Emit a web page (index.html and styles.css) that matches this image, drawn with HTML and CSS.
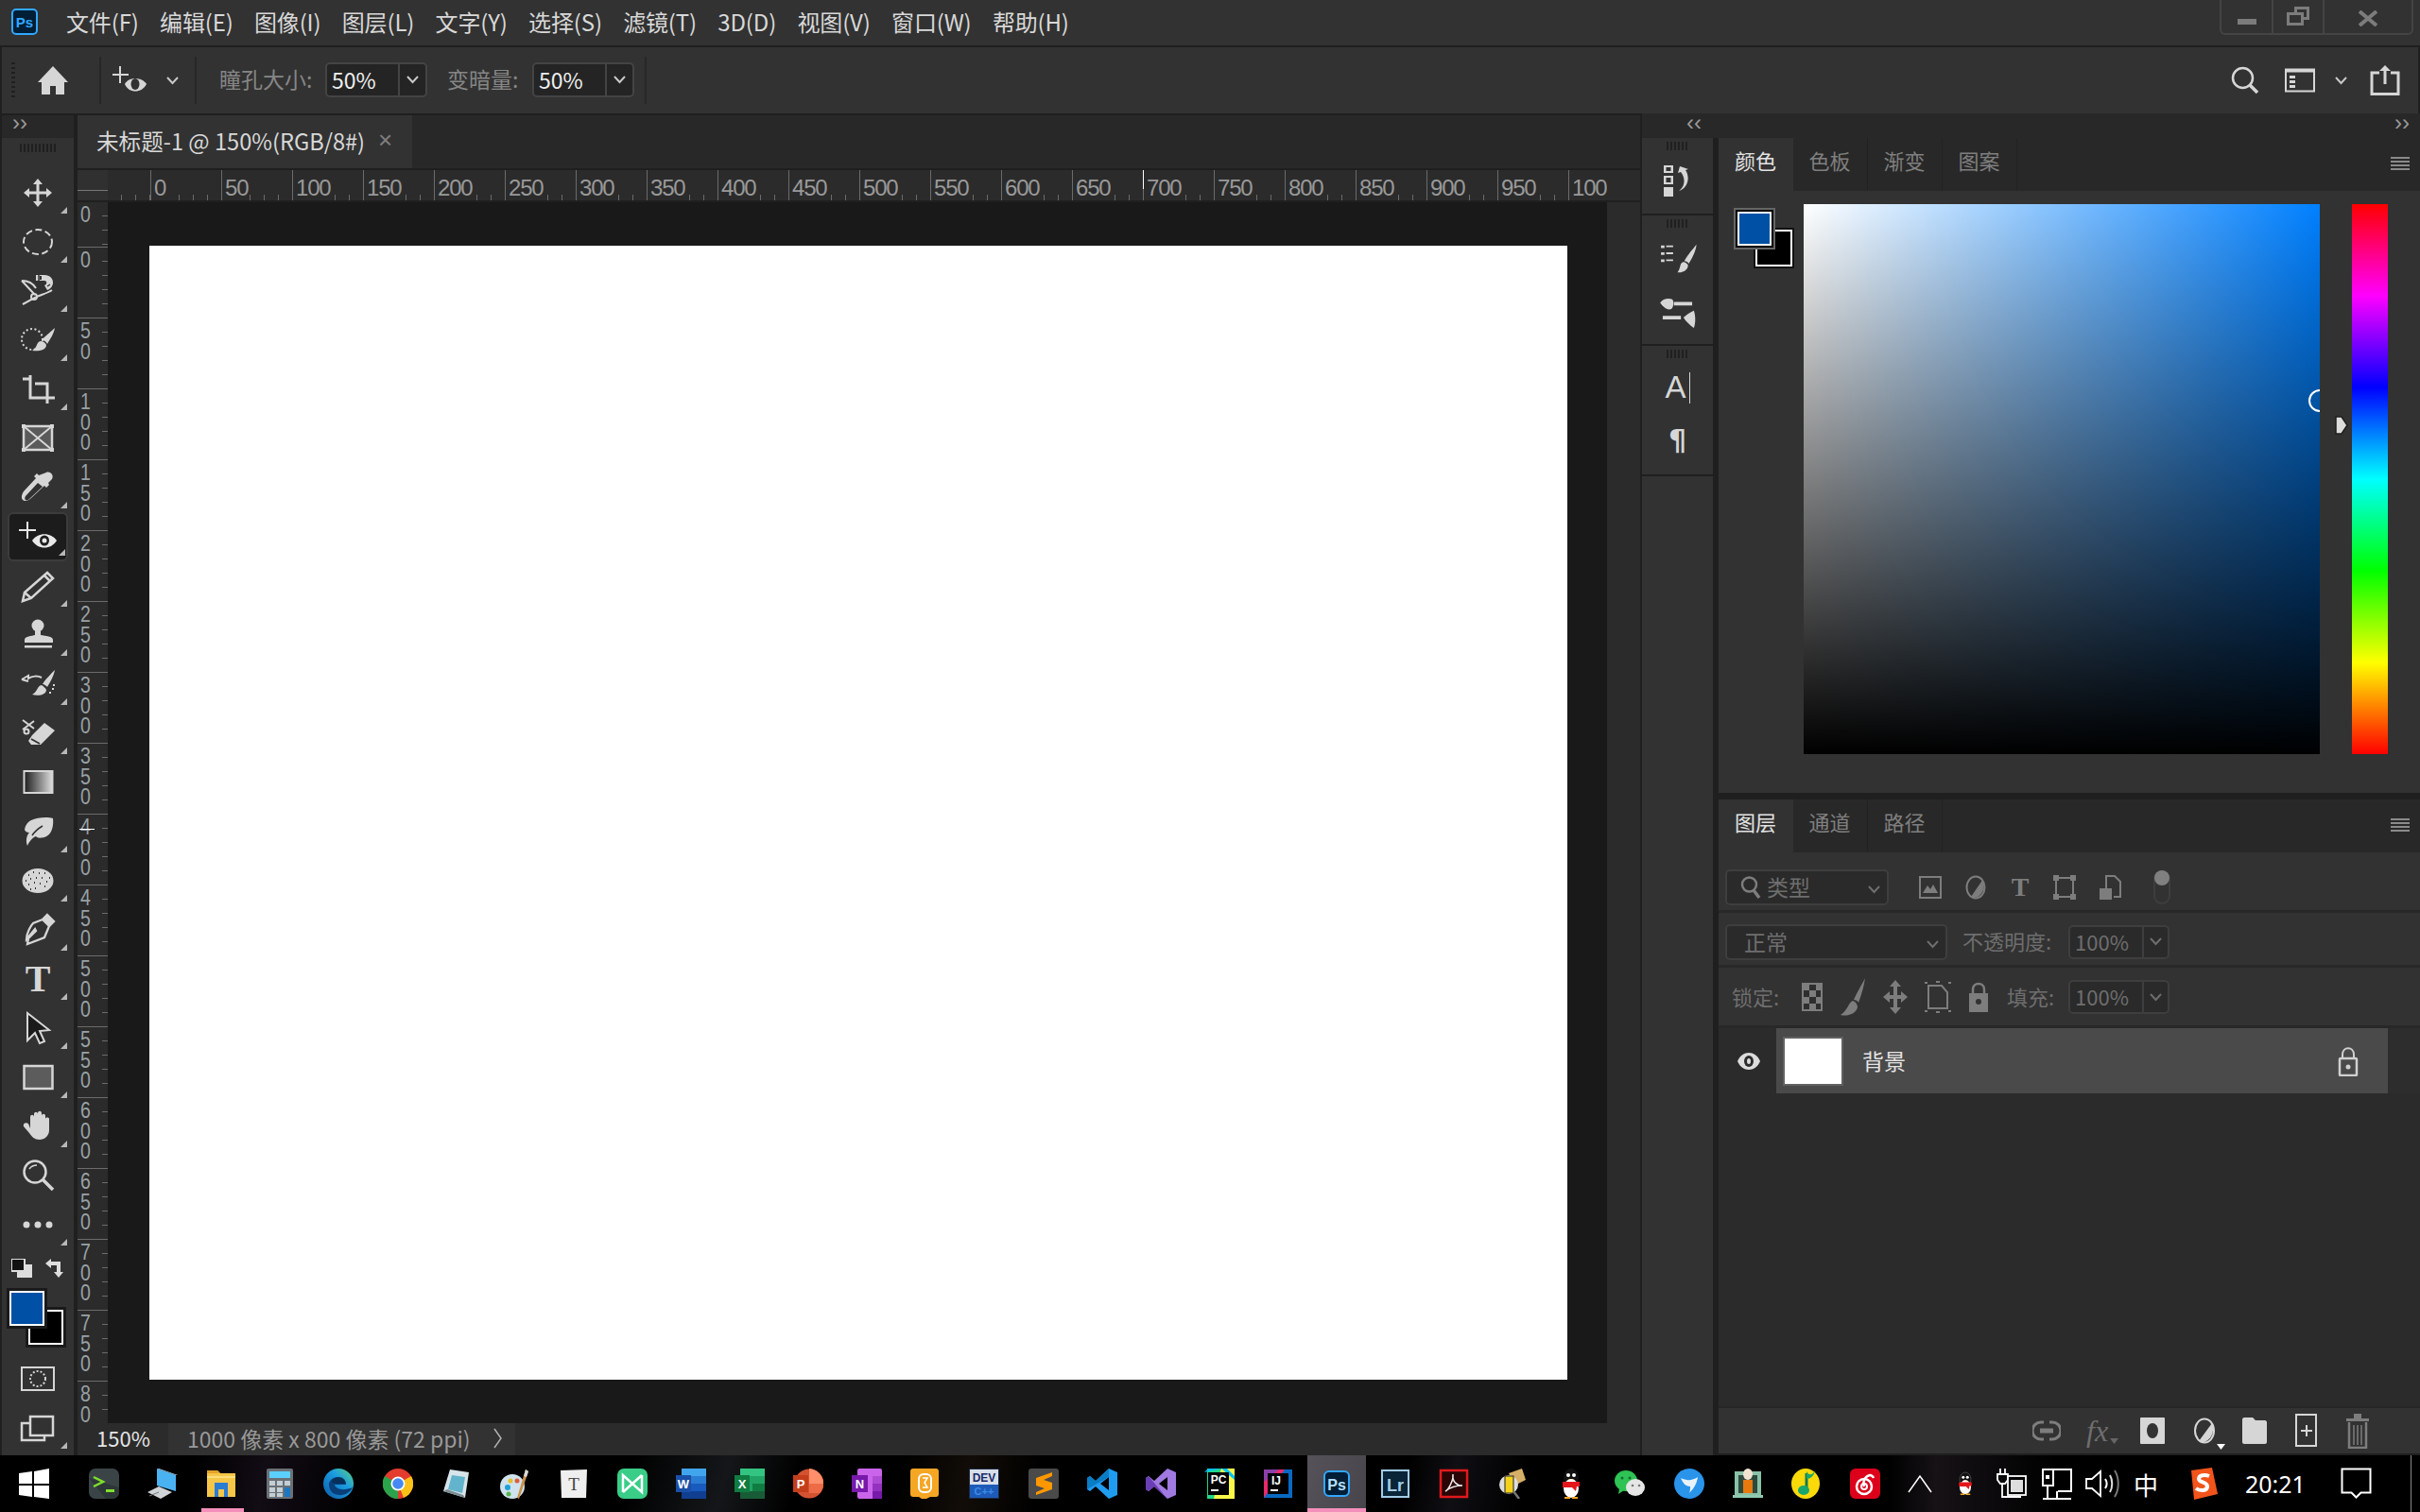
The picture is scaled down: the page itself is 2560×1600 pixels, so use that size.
FILE: index.html
```html
<!DOCTYPE html>
<html lang="zh">
<head>
<meta charset="utf-8">
<title>Photoshop</title>
<link rel="stylesheet" href="styles.css">
</head>
<body>
<header class="menubar">
  <svg class="ps-logo" viewBox="0 0 28 28"><rect x="1" y="1" width="26" height="26" rx="4" fill="#001e36" stroke="#31a8ff" stroke-width="2"/><text x="14" y="20" text-anchor="middle" class="logo-text" font-size="15" fill="#31a8ff">Ps</text></svg>
  <nav class="menu">
    <span>文件(F)</span><span>编辑(E)</span><span>图像(I)</span><span>图层(L)</span><span>文字(Y)</span><span>选择(S)</span><span>滤镜(T)</span><span>3D(D)</span><span>视图(V)</span><span>窗口(W)</span><span>帮助(H)</span>
  </nav>
  <div class="winctl">
    <div class="winbtn w-min"><svg width="20" height="6"><rect width="20" height="6" fill="#7c7c7c"/></svg></div>
    <div class="winbtn w-res"><svg width="24" height="20" viewBox="0 0 24 20"><path d="M8 0h16v14h-6v6H0V6h8zM11 3v3h7v5h3V3zM3 9v8h12V9z" fill="#7c7c7c"/></svg></div>
    <div class="winbtn w-close"><svg width="20" height="17" viewBox="0 0 20 17"><path d="M1 1l18 15M19 1L1 16" stroke="#7c7c7c" stroke-width="4"/></svg></div>
  </div>
</header>

<section class="options">
  <i class="opt-grip"></i>
  <svg class="opt-home" width="32" height="30" viewBox="0 0 32 30"><path d="M16 0L0 17h4v13h9v-9h6v9h9V17h4z" fill="#d6d6d6"/></svg>
  <i class="opt-sep s1"></i>
  <svg class="opt-tool" width="38" height="30" viewBox="0 0 38 30"><path d="M9 0v18M1 9h17" stroke="#d6d6d6" stroke-width="2" fill="none"/><path d="M14 19c4-8 18-8 23 0-5 10-19 10-23 0z" fill="#d6d6d6"/><ellipse cx="25" cy="19" rx="4.500" ry="6" fill="#323232"/></svg>
  <svg class="chev c1" width="13" height="9" viewBox="0 0 13 9"><path d="M1 1l5.500 6L12 1" stroke="#c8c8c8" stroke-width="2" fill="none"/></svg>
  <i class="opt-sep s2"></i>
  <span class="opt-label l1">瞳孔大小:</span>
  <div class="opt-input"><span class="opt-val">50%</span><span class="opt-drop"><svg width="13" height="9" viewBox="0 0 13 9"><path d="M1 1l5.500 6L12 1" stroke="#c8c8c8" stroke-width="2" fill="none"/></svg></span></div>
  <span class="opt-label l2">变暗量:</span>
  <div class="opt-input"><span class="opt-val">50%</span><span class="opt-drop"><svg width="13" height="9" viewBox="0 0 13 9"><path d="M1 1l5.500 6L12 1" stroke="#c8c8c8" stroke-width="2" fill="none"/></svg></span></div>
  <i class="opt-sep s3"></i>
  <div class="opt-right">
    <svg width="30" height="30" viewBox="0 0 30 30"><circle cx="12.500" cy="12.500" r="10.500" fill="none" stroke="#d6d6d6" stroke-width="2.500"/><path d="M20 20l8 8" stroke="#d6d6d6" stroke-width="3.500"/></svg>
    <svg class="or-panel" width="32" height="26" viewBox="0 0 32 26"><path d="M1 1.500h30v23H1z" fill="none" stroke="#d6d6d6" stroke-width="2"/><path d="M1 1.500h30v3H1z" fill="#d6d6d6"/><path d="M5 8h6v3H5zM5 13h6v3H5zM5 18h6v3H5z" fill="#d6d6d6"/></svg>
    <svg class="or-chev" width="13" height="9" viewBox="0 0 13 9"><path d="M1 1l5.500 6L12 1" stroke="#c8c8c8" stroke-width="2" fill="none"/></svg>
    <svg class="or-share" width="32" height="32" viewBox="0 0 32 32"><path d="M10 8H2v22.500h28V8h-8" fill="none" stroke="#d6d6d6" stroke-width="3"/><path d="M16 0l-6 6h4.500v14h3V6H22z" fill="#d6d6d6"/></svg>
  </div>
</section>

<main class="workspace">
  <aside class="toolcol">
    <div class="collapse"><span class="dbl">&rsaquo;&rsaquo;</span></div>
    <div class="tools">
      <i class="grip"></i>
      <div class="tool more"><svg viewBox="0 0 40 40"><path d="M20 5l-5 6h3.500v7.500H11V15l-6 5 6 5v-3.500h7.500V29H15l5 6 5-6h-3.500v-7.500H29V25l6-5-6-5v3.500h-7.500V11H25z" fill="#d6d6d6"/></svg></div>
      <div class="tool more"><svg viewBox="0 0 40 40"><ellipse cx="20" cy="20" rx="15" ry="13" fill="none" stroke="#d6d6d6" stroke-width="2" stroke-dasharray="7 3.500"/></svg></div>
      <div class="tool more"><svg viewBox="0 0 40 40"><path d="M3 9l14 15M3 9c6 0 12 3 15 8M4 34l13-7c5-3 12-4 18-8" fill="none" stroke="#d6d6d6" stroke-width="2"/><circle cx="16" cy="26" r="3" fill="none" stroke="#d6d6d6" stroke-width="2"/><path d="M18 3h9c6 0 9 4 9 8s-3 7-6 8l-3-5c3-1 3-5 0-5h-9zM22 4v4h2V4zM22 14" fill="#d6d6d6"/><path d="M21 3v6M30 15l3-2" stroke="#323232" stroke-width="1.500"/></svg></div>
      <div class="tool more"><svg viewBox="0 0 40 40"><circle cx="14" cy="19" r="11" fill="none" stroke="#d6d6d6" stroke-width="2" stroke-dasharray="2 2.500"/><path d="M38 7c-4 4-10 8-14 13 3 0 5 2 6 4 3-5 7-11 8-17zM23 21c-5 1-3 7-9 10 6 1 15 0 15-6-1-2-3-4-6-4z" fill="#d6d6d6"/></svg></div>
      <div class="tool more"><svg viewBox="0 0 40 40"><path d="M4 9h8M12 5v24h20M30 35V14H17M32 29h6" fill="none" stroke="#d6d6d6" stroke-width="3"/></svg></div>
      <div class="tool"><svg viewBox="0 0 40 40"><rect x="5" y="7" width="30" height="25" fill="#5a5a5a" stroke="#d6d6d6" stroke-width="2.500"/><path d="M5 7l30 25M35 7L5 32" stroke="#d6d6d6" stroke-width="2"/><path d="M3 5h4v4H3zM33 5h4v4h-4zM3 30h4v4H3zM33 30h4v4h-4z" fill="#d6d6d6"/></svg></div>
      <div class="tool more"><svg viewBox="0 0 40 40"><path d="M29 4c2-1 5 0 6 2s1 4-1 6l-3 3 1 2-3 3-2-2-14 13c-3 3-7 4-9 2-2-2-1-6 1-9l13-14-2-2 3-3 2 2z" fill="#d6d6d6"/><path d="M20 15L7 29c-1 2-1 3 0 4s3 0 4-1l14-13z" fill="#323232"/></svg></div>
      <div class="tool active more"><svg viewBox="0 0 40 40"><path d="M9 4v18M0 13h18" stroke="#e8e8e8" stroke-width="2"/><path d="M14 24c6-9 20-9 26 0-6 10-20 10-26 0z" fill="#e8e8e8"/><ellipse cx="27" cy="24" rx="5" ry="5.500" fill="#1c1c1c"/><circle cx="27" cy="24" r="2.500" fill="#e8e8e8"/></svg></div>
      <div class="tool more"><svg viewBox="0 0 40 40"><path d="M30 6l6 6L13 33l-9 3 2-9zM27 9l6 6M6 27l7 6" fill="none" stroke="#d6d6d6" stroke-width="2.500"/></svg></div>
      <div class="tool more"><svg viewBox="0 0 40 40"><circle cx="20" cy="10" r="6.500" fill="#d6d6d6"/><path d="M17 14h6v6c5 1 13 1 13 5v3H6v-3c0-4 8-4 11-5z" fill="#d6d6d6"/><path d="M6 31h29v2.500H6z" fill="#d6d6d6"/></svg></div>
      <div class="tool more"><svg viewBox="0 0 40 40"><path d="M38 5c-4 4-10 10-13 15 2 0 4 2 5 3 3-5 7-12 8-18zM24 21c-5 1-4 7-10 10 7 2 15 0 15-5-1-2-3-4-5-5z" fill="#d6d6d6"/><path d="M3 15l7-4v3c4-3 10-3 14-1M3 15l7 2" fill="none" stroke="#d6d6d6" stroke-width="2"/><path d="M32 29h2M35 25h2M36 21h2" stroke="#d6d6d6" stroke-width="2"/></svg></div>
      <div class="tool more"><svg viewBox="0 0 40 40"><path d="M4 6l12 9M4 16l12-9" stroke="#d6d6d6" stroke-width="2"/><circle cx="8" cy="18" r="2.500" fill="none" stroke="#d6d6d6" stroke-width="2"/><path d="M14 22L27 9l11 8-15 15H13l-3-4z" fill="#d6d6d6"/><path d="M13 26l9 5" stroke="#323232" stroke-width="2"/></svg></div>
      <div class="tool"><svg viewBox="0 0 40 40"><defs><linearGradient id="tg"><stop offset="0" stop-color="#1c1c1c"/><stop offset="1" stop-color="#ddd"/></linearGradient></defs><rect x="5.500" y="8" width="30" height="23" fill="url(#tg)" stroke="#d6d6d6" stroke-width="2"/></svg></div>
      <div class="tool more"><svg viewBox="0 0 40 40"><path d="M13 8c6-3 17-4 23-2 1 7-1 18-9 20-5 1-7 1-9-1-3 1-7 5-9 10-2-5-1-11 2-14-3 0-4-1-5-3 1-5 3-8 7-10z" fill="#d6d6d6"/><path d="M14 24c2-3 6-7 11-10" stroke="#323232" stroke-width="1.500" fill="none"/></svg></div>
      <div class="tool more"><svg viewBox="0 0 40 40"><ellipse cx="20" cy="20" rx="16.500" ry="13" fill="#d6d6d6"/><path d="M10 14h1M15 11h1M21 12h1M27 12h1M32 17h1M7 20h1M12 18h1M18 17h1M24 17h1M29 21h1M10 24h1M16 22h1M22 23h1M27 26h1M17 28h1M12 29h1" stroke="#323232" stroke-width="2"/></svg></div>
      <div class="tool more"><svg viewBox="0 0 40 40"><path d="M30 4l7 7-4 4-7-7zM25 9l7 7-5 12-18 7 1-6 8-8-1-2-9 11c0-7 5-15 7-17z" fill="none" stroke="#d6d6d6" stroke-width="2.300"/><path d="M30 4l7 7-4 4-7-7z" fill="#d6d6d6"/></svg></div>
      <div class="tool more"><span class="tool-t">T</span></div>
      <div class="tool more"><svg viewBox="0 0 40 40"><path d="M9 4l23 18-10 1 5 11-5 2-5-11-8 8z" fill="#1a1a1a" stroke="#d6d6d6" stroke-width="2"/></svg></div>
      <div class="tool more"><svg viewBox="0 0 40 40"><rect x="5.500" y="8" width="30" height="24" fill="#5c5c5c" stroke="#d6d6d6" stroke-width="2.500"/></svg></div>
      <div class="tool more"><svg viewBox="0 0 40 40"><path d="M12 22V10c0-3 4-3 4 0V7c0-3 4-3 4 0v-1c0-3 4-3 4 0v3c0-3 4-3 4 0v3c0-2 4-2 4 0v12c0 6-5 10-10 10-6 0-8-3-11-7l-6-7c-1-3 2-5 5-3z" fill="#d6d6d6"/></svg></div>
      <div class="tool"><svg viewBox="0 0 40 40"><circle cx="17" cy="16" r="11.500" fill="none" stroke="#d6d6d6" stroke-width="2.500"/><path d="M25 24l11 11" stroke="#d6d6d6" stroke-width="3.500"/><path d="M11 13c2-3 5-4 8-4" stroke="#d6d6d6" stroke-width="1.500" fill="none"/></svg></div>
      <div class="tool more"><svg viewBox="0 0 40 40"><circle cx="8" cy="20" r="3.500" fill="#d6d6d6"/><circle cx="20" cy="20" r="3.500" fill="#d6d6d6"/><circle cx="32" cy="20" r="3.500" fill="#d6d6d6"/></svg></div>
      <div class="color-tools">
        <svg class="ct-reset" width="22" height="20" viewBox="0 0 22 20"><rect x="0" y="0" width="14" height="13" fill="#111" stroke="#ddd" stroke-width="2"/><path d="M14 6h8v14H6v-6h8z" fill="#ddd"/></svg>
        <svg class="ct-swap" width="20" height="20" viewBox="0 0 20 20"><path d="M0 5l6-5v3h10v11h3l-5 6-5-6h3V7H6v3z" fill="#ddd"/></svg>
      </div>
      <div class="fgbg"><i class="bg-swatch"></i><i class="fg-swatch"></i></div>
      <div class="tool qm"><svg viewBox="0 0 40 40"><rect x="3" y="8" width="34" height="24" fill="none" stroke="#d6d6d6" stroke-width="2"/><circle cx="20" cy="20" r="8" fill="none" stroke="#d6d6d6" stroke-width="2" stroke-dasharray="2 2"/></svg></div>
      <div class="tool more"><svg viewBox="0 0 40 40"><path d="M12 15H3v18h24v-5" fill="none" stroke="#d6d6d6" stroke-width="2.500"/><rect x="12" y="8" width="24" height="20" fill="#323232" stroke="#d6d6d6" stroke-width="2.500"/></svg></div>
    </div>
  </aside>

  <section class="doc">
    <div class="doc-tabs"><div class="doc-tab"><span>未标题-1 @ 150%(RGB/8#)</span><b>×</b></div></div>
    <div class="hrow">
      <div class="rcorner"></div>
      <div class="hruler">
        <div class="hcell first"></div>
        <div class="hcell"><span>0</span></div><div class="hcell"><span>50</span></div><div class="hcell"><span>100</span></div><div class="hcell"><span>150</span></div><div class="hcell"><span>200</span></div><div class="hcell"><span>250</span></div><div class="hcell"><span>300</span></div><div class="hcell"><span>350</span></div><div class="hcell"><span>400</span></div><div class="hcell"><span>450</span></div><div class="hcell"><span>500</span></div><div class="hcell"><span>550</span></div><div class="hcell"><span>600</span></div><div class="hcell"><span>650</span></div><div class="hcell marked"><span>700</span></div><div class="hcell"><span>750</span></div><div class="hcell"><span>800</span></div><div class="hcell"><span>850</span></div><div class="hcell"><span>900</span></div><div class="hcell"><span>950</span></div><div class="hcell"><span>1000</span></div>
      </div>
      <div class="gutter"></div>
    </div>
    <div class="mainrow">
      <div class="vruler">
        <div class="vcell first"><span>0</span></div>
        <div class="vcell"><span>0</span></div><div class="vcell"><span>5</span><span>0</span></div><div class="vcell"><span>1</span><span>0</span><span>0</span></div><div class="vcell"><span>1</span><span>5</span><span>0</span></div><div class="vcell"><span>2</span><span>0</span><span>0</span></div><div class="vcell"><span>2</span><span>5</span><span>0</span></div><div class="vcell"><span>3</span><span>0</span><span>0</span></div><div class="vcell"><span>3</span><span>5</span><span>0</span></div><div class="vcell marked"><span>4</span><span>0</span><span>0</span></div><div class="vcell"><span>4</span><span>5</span><span>0</span></div><div class="vcell"><span>5</span><span>0</span><span>0</span></div><div class="vcell"><span>5</span><span>5</span><span>0</span></div><div class="vcell"><span>6</span><span>0</span><span>0</span></div><div class="vcell"><span>6</span><span>5</span><span>0</span></div><div class="vcell"><span>7</span><span>0</span><span>0</span></div><div class="vcell"><span>7</span><span>5</span><span>0</span></div><div class="vcell"><span>8</span><span>0</span></div>
      </div>
      <div class="pasteboard"><div class="artboard"></div></div>
      <div class="gutter"></div>
    </div>
    <div class="status">
      <span class="st-zoom">150%</span>
      <span class="st-info">1000 像素 x 800 像素 (72 ppi)<svg width="10" height="22" viewBox="0 0 10 22"><path d="M1 1l7 10-7 10" fill="none" stroke="#b0b0b0" stroke-width="1.500"/></svg></span>
    </div>
  </section>

  <div class="rightarea">
    <div class="rstrip"><span class="dbl d-left">&lsaquo;&lsaquo;</span><span class="dbl d-right">&rsaquo;&rsaquo;</span></div>
    <div class="rmain">
      <div class="dock">
        <div class="dblock b1"><i class="grip"></i>
          <svg width="30" height="33" viewBox="0 0 30 33"><path d="M0 0h10v8H0zM2.500 2v4h5V2zM0 11h10v9H0zM2.500 13v5h5v-5zM0 23h10v10H0z" fill="#d6d6d6"/><path d="M17 1l-2 7 3-1c5 6 5 15-2 20 8-2 13-13 7-22l3-1z" fill="#d6d6d6"/></svg>
        </div>
        <div class="dblock b2"><i class="grip"></i>
          <svg class="brp" width="41" height="33" viewBox="0 0 44 36"><path d="M3 3h4v3H3zM9 3h8v2H9zM3 11h4v3H3zM9 11h8v2H9zM3 19h4v3H3zM9 19h8v2H9z" fill="#d6d6d6"/><path d="M44 2c-4 5-11 13-14 19 2 0 4 1 5 3 4-6 8-14 9-22zM29 22c-5 1-3 8-7 12 6 1 13-3 12-9-1-1-3-3-5-3z" fill="#d6d6d6"/></svg>
          <svg class="adj" width="41" height="33" viewBox="0 0 44 36"><path d="M2 6c3-5 10-6 14-4 2 2 2 8-1 11-5 2-9-2-13-7zM18 5h21v4H18zM5 21h21v4H5zM29 23c3-3 9-7 12-8 2 6 2 14 0 20-3-2-9-7-12-12z" fill="#d6d6d6"/></svg>
        </div>
        <div class="dblock b3"><i class="grip"></i>
          <div class="dk-a"><span>A</span><i></i></div>
          <div class="dk-p">¶</div>
        </div>
        <div class="dblock b4"></div>
      </div>
      <div class="panels">
        <section class="panel p-color">
          <div class="ptabs">
            <span class="ptab on">颜色</span><span class="ptab">色板</span><span class="ptab">渐变</span><span class="ptab">图案</span>
            <svg class="pmenu" width="20" height="14" viewBox="0 0 20 14"><path d="M0 0h20v2H0zM0 4h20v2H0zM0 8h20v2H0zM0 12h20v2H0z" fill="#8a8a8a"/></svg>
          </div>
          <div class="colorbody">
            <div class="cswatch"><i class="cs-bg"></i><i class="cs-fg"></i></div>
            <div class="cfield"><i class="ccursor"></i></div>
            <div class="hue-wrap">
              <svg class="hue-handle" width="14" height="24" viewBox="0 0 14 24"><path d="M1 3h6l6 9-6 9H1z" fill="#ddd" stroke="#1f1f1f" stroke-width="1.500"/></svg>
              <div class="hue"></div>
            </div>
          </div>
        </section>
        <section class="panel p-layers">
          <div class="ptabs">
            <span class="ptab on">图层</span><span class="ptab">通道</span><span class="ptab">路径</span>
            <svg class="pmenu" width="20" height="14" viewBox="0 0 20 14"><path d="M0 0h20v2H0zM0 4h20v2H0zM0 8h20v2H0zM0 12h20v2H0z" fill="#8a8a8a"/></svg>
          </div>
          <div class="lrow r-filter">
            <div class="lselect ls-kind">
              <svg width="22" height="26" viewBox="0 0 22 26"><circle cx="9.500" cy="10" r="7.500" fill="none" stroke="#7d7d7d" stroke-width="2.500"/><path d="M14 16l6 8" stroke="#7d7d7d" stroke-width="3.500"/></svg>
              <span>类型</span>
              <svg class="sel-chev" width="13" height="9" viewBox="0 0 13 9"><path d="M1 1l5.500 6L12 1" stroke="#6e6e6e" stroke-width="2" fill="none"/></svg>
            </div>
            <div class="fil-icons">
              <svg width="24" height="24" viewBox="0 0 24 24"><rect x="1" y="1" width="22" height="22" fill="none" stroke="#7d7d7d" stroke-width="2"/><path d="M4 18l5-8 3 4 3-5 5 9z" fill="#7d7d7d"/></svg>
              <svg width="24" height="26" viewBox="0 0 24 26"><ellipse cx="12" cy="13" rx="9.500" ry="11.500" fill="none" stroke="#7d7d7d" stroke-width="2"/><path d="M19 5.500A10 12 0 0 1 7 23z" fill="#7d7d7d"/></svg>
              <span class="fi-t">T</span>
              <svg width="24" height="26" viewBox="0 0 24 26"><rect x="3" y="3" width="18" height="20" fill="none" stroke="#7d7d7d" stroke-width="2"/><path d="M0 0h6v6H0zM18 0h6v6h-6zM0 20h6v6H0zM18 20h6v6h-6z" fill="#7d7d7d"/></svg>
              <svg width="24" height="26" viewBox="0 0 24 26"><path d="M8 14V1h9l6 6v16h-7" fill="none" stroke="#7d7d7d" stroke-width="2"/><rect x="1" y="14" width="13" height="12" fill="#7d7d7d"/></svg>
            </div>
            <div class="ftoggle"><i></i></div>
          </div>
          <div class="lrow r-blend">
            <div class="lselect ls-mode"><span>正常</span><svg class="sel-chev" width="13" height="9" viewBox="0 0 13 9"><path d="M1 1l5.500 6L12 1" stroke="#6e6e6e" stroke-width="2" fill="none"/></svg></div>
            <span class="llabel lb-op">不透明度:</span>
            <div class="lpct"><span>100%</span><b><svg width="13" height="9" viewBox="0 0 13 9"><path d="M1 1l5.500 6L12 1" stroke="#6e6e6e" stroke-width="2" fill="none"/></svg></b></div>
          </div>
          <div class="lrow r-lock">
            <span class="llabel lb-lock">锁定:</span>
            <div class="lock-icons">
              <svg width="22" height="30" viewBox="0 0 22 30"><rect x="1" y="1" width="20" height="28" fill="#2e2e2e" stroke="#7d7d7d" stroke-width="2"/><path d="M1 1h7v7H1zM15 1h6v7h-6zM8 8h7v7H8zM1 15h7v7H1zM15 15h6v7h-6zM8 22h7v7H8z" fill="#7d7d7d"/></svg>
              <svg width="28" height="40" viewBox="0 0 28 40"><path d="M27 0c-3 6-9 16-12 23 2 0 4 1 5 3 3-8 6-18 7-26zM14 24c-5 2-5 10-13 15 7 2 16-1 18-8 0-3-2-6-5-7z" fill="#7d7d7d"/></svg>
              <svg width="26" height="36" viewBox="0 0 26 36"><path d="M13 0l-6 7h4v9H7v-4l-7 6 7 6v-4h4v9H7l6 7 6-7h-4v-9h4v4l7-6-7-6v4h-4V7h4z" fill="#7d7d7d"/></svg>
              <svg width="28" height="34" viewBox="0 0 28 34"><path d="M4 5h14l6 7v17H4z" fill="none" stroke="#7d7d7d" stroke-width="2"/><path d="M0 1h3v2H0zM25 1h3v2h-3zM0 31h3v2H0zM25 31h3v2h-3zM12 0h4v2h-4zM12 32h4v2h-4z" fill="#7d7d7d"/></svg>
              <svg width="22" height="32" viewBox="0 0 22 32"><path d="M5 13V8c0-8 12-8 12 0v5" fill="none" stroke="#7d7d7d" stroke-width="2.500"/><path d="M1 12h20v20H1z" fill="#7d7d7d"/><circle cx="11" cy="21" r="3" fill="#323232"/></svg>
            </div>
            <span class="llabel lb-fill">填充:</span>
            <div class="lpct"><span>100%</span><b><svg width="13" height="9" viewBox="0 0 13 9"><path d="M1 1l5.500 6L12 1" stroke="#6e6e6e" stroke-width="2" fill="none"/></svg></b></div>
          </div>
          <div class="llist">
            <div class="layer">
              <div class="leye"><svg width="26" height="20" viewBox="0 0 26 20"><path d="M1 10c5-12 19-12 24 0-5 12-19 12-24 0z" fill="#dcdcdc"/><ellipse cx="13" cy="10" rx="5" ry="6" fill="#2b2b2b"/><ellipse cx="13" cy="10" rx="2" ry="3" fill="#dcdcdc"/></svg></div>
              <div class="lbody">
                <div class="lthumb"></div>
                <span class="lname">背景</span>
                <svg class="llock" width="22" height="32" viewBox="0 0 22 32"><path d="M5 14V9c0-9 12-9 12 0v5" fill="none" stroke="#d0d0d0" stroke-width="2"/><rect x="2" y="13" width="18" height="18" rx="1" fill="none" stroke="#d0d0d0" stroke-width="2.500"/><circle cx="11" cy="22" r="2.500" fill="#d0d0d0"/></svg>
              </div>
              <div class="lscroll"></div>
            </div>
            <div class="lempty"></div>
          </div>
          <div class="lfoot">
            <svg width="30" height="24" viewBox="0 0 30 24"><path d="M12 3H9a9 9 0 0 0 0 18h3M18 3h3a9 9 0 0 1 0 18h-3" fill="none" stroke="#7d7d7d" stroke-width="3"/><path d="M8 12h14" stroke="#7d7d7d" stroke-width="5"/></svg>
            <span class="f-fx">fx<svg width="9" height="6" viewBox="0 0 9 6"><path d="M0 0h9L4.500 6z" fill="#666"/></svg></span>
            <svg width="26" height="28" viewBox="0 0 26 28"><rect width="26" height="28" rx="1" fill="#d6d6d6"/><ellipse cx="13" cy="14" rx="6" ry="8" fill="#323232"/></svg>
            <span class="f-adj"><svg width="24" height="28" viewBox="0 0 24 28"><ellipse cx="12" cy="14" rx="10" ry="12.500" fill="none" stroke="#d6d6d6" stroke-width="2"/><path d="M20 6A11 14 0 0 1 6 25z" fill="#d6d6d6"/></svg><svg class="f-tri" width="9" height="6" viewBox="0 0 9 6"><path d="M0 0h9L4.500 6z" fill="#fff"/></svg></span>
            <svg width="26" height="28" viewBox="0 0 26 28"><path d="M0 2c0-1 1-2 2-2h9l3 3h10c1 0 2 1 2 2v21c0 1-1 2-2 2H2c-1 0-2-1-2-2z" fill="#d6d6d6"/></svg>
            <svg width="24" height="36" viewBox="0 0 24 36"><rect x="1" y="1" width="21" height="33" fill="none" stroke="#d6d6d6" stroke-width="2"/><path d="M11 12h2v5h5v2h-5v5h-2v-5H6v-2h5z" fill="#d6d6d6"/></svg>
            <svg width="24" height="38" viewBox="0 0 24 38"><path d="M0 6h24v3H0zM8 6V1h8v5" fill="#7d7d7d"/><path d="M3 10v27h18V10" fill="none" stroke="#7d7d7d" stroke-width="2.500"/><path d="M8 13v21M12 13v21M16 13v21" stroke="#7d7d7d" stroke-width="1.500"/></svg>
          </div>
        </section>
      </div>
    </div>
  </div>
</main>

<footer class="taskbar">
  <div class="tile win"><svg viewBox="0 0 32 32" class="winlogo"><path d="M0 5l14-2v13H0zM16 3l16-3v16H16zM0 18h14v12L0 28zM16 18h16v14l-16-2z" fill="#fff"/></svg></div>
  <div class="tile"><svg viewBox="0 0 32 32"><rect width="32" height="32" rx="7" fill="#3a4446"/><path d="M0 10l18 22h7a7 7 0 0 0 7-7V20z" fill="#2a3232" opacity=".7"/><path d="M5 9l10 5-10 5" fill="none" stroke="#7fe02c" stroke-width="2.500"/><path d="M18 22h9v3h-9z" fill="#7fe02c"/></svg></div>
  <div class="tile"><svg viewBox="0 0 32 32"><path d="M10 0l20 7v17L10 18z" fill="#4ab2f1"/><path d="M10 0l2-0 20 7-2 0z" fill="#c4ddef"/><path d="M0 25l12-6 14 6-12 7z" fill="#cfd3d6"/><path d="M2 29l10-4" stroke="#777"/></svg></div>
  <div class="tile under"><svg viewBox="0 0 32 32"><path d="M1 2h11l3 3h16v25H1z" fill="#f6c648"/><path d="M1 2h11l3 3H1z" fill="#e2a32a"/><path d="M1 9h30" stroke="#fbdf7a" stroke-width="2"/><path d="M9 15h14v15H9z" fill="#2b7cd3"/><path d="M13 22h6v8h-6z" fill="#f6c648"/></svg></div>
  <div class="tile"><svg viewBox="0 0 32 32"><rect x="2" width="28" height="32" rx="2" fill="#6b7075"/><rect x="5" y="3" width="22" height="7" fill="#5bd0ff"/><path d="M5 13h6v5H5zM13 13h6v5h-6zM21 13h6v5h-6zM5 20h6v5H5zM13 20h6v5h-6zM5 26h6v4H5zM13 26h6v4h-6z" fill="#c3cfd6"/><path d="M21 20h6v10h-6z" fill="#1c77c3"/></svg></div>
  <div class="tile"><svg viewBox="0 0 32 32"><defs><linearGradient id="eg" x1="0" y1="1" x2="1" y2="0"><stop offset="0" stop-color="#0c59a4"/><stop offset=".6" stop-color="#1b9de2"/><stop offset="1" stop-color="#5bd178"/></linearGradient></defs><circle cx="16" cy="16" r="16" fill="url(#eg)"/><path d="M31 20c-3 7-12 10-19 7-4-2-6-6-6-10s4-8 9-8c6 0 9 4 9 8H12c1 5 9 7 19 3z" fill="#083f78"/><path d="M14 16h10c0-5-4-8-9-7-4 1-6 3-6 6 1 0 3 0 5 1z" fill="#000" opacity=".25"/></svg></div>
  <div class="tile"><svg viewBox="0 0 32 32"><circle cx="16" cy="16" r="16" fill="#e33b2e"/><path d="M16 16L30 8a16 16 0 0 1-8 23z" fill="#fbc116"/><path d="M16 16L16 32A16 16 0 0 1 2 8z" fill="#2ba24c"/><circle cx="16" cy="16" r="7.500" fill="#fff"/><circle cx="16" cy="16" r="5.800" fill="#4689f4"/></svg></div>
  <div class="tile"><svg viewBox="0 0 32 32"><path d="M9 1l20 3-4 27L2 24z" fill="#d7e4ea"/><path d="M11 7l14 2-3 17-15-4z" fill="#62b3cc"/><path d="M2 24l23 7-2-3L6 22z" fill="#7b8c92"/></svg></div>
  <div class="tile"><svg viewBox="0 0 32 32"><ellipse cx="13" cy="19" rx="13" ry="13" fill="#cfe2ee"/><circle cx="8" cy="20" r="3" fill="#1ea1d6"/><circle cx="11" cy="13" r="2.500" fill="#e3c12b"/><circle cx="18" cy="13" r="2.500" fill="#e05d3a"/><circle cx="9" cy="27" r="2.500" fill="#56b44c"/><path d="M27 1l3 2-10 29-2-1z" fill="#c9914a"/><path d="M27 1l3 2-2 6-3-1z" fill="#d9d9d9"/></svg></div>
  <div class="tile"><svg viewBox="0 0 32 32"><path d="M2 2l28-1-1 30-26 0z" fill="#efefef"/><text x="16" y="23" text-anchor="middle" class="logo-serif" font-size="19" fill="#444">T</text></svg></div>
  <div class="tile"><svg viewBox="0 0 32 32"><rect width="32" height="32" rx="7" fill="#39cd88"/><path d="M6 25V7l20 18V7" fill="none" stroke="#fff" stroke-width="2.500"/><path d="M6 25L26 7" fill="none" stroke="#fff" stroke-width="2.500"/></svg></div>
  <div class="tile"><svg viewBox="0 0 32 32"><rect x="6" width="26" height="32" rx="2" fill="#2b7cd3"/><rect x="6" width="26" height="8" fill="#41a5ee"/><rect x="6" y="16" width="26" height="8" fill="#185abd"/><rect x="6" y="24" width="26" height="8" fill="#103f91"/><rect y="7" width="16" height="18" fill="#1a4fa8"/><text x="8" y="21" text-anchor="middle" class="logo-text" font-size="13" fill="#fff">W</text></svg></div>
  <div class="tile"><svg viewBox="0 0 32 32"><rect x="6" width="26" height="32" rx="2" fill="#21a366"/><rect x="6" width="26" height="8" fill="#33c481"/><rect x="19" y="16" width="13" height="8" fill="#107c41"/><rect x="6" y="24" width="26" height="8" fill="#185c37"/><rect y="7" width="16" height="18" fill="#107c41"/><text x="8" y="21" text-anchor="middle" class="logo-text" font-size="13" fill="#fff">X</text></svg></div>
  <div class="tile"><svg viewBox="0 0 32 32"><circle cx="17" cy="16" r="15.500" fill="#d35230"/><path d="M17 0a16 16 0 0 1 15 16H17z" fill="#ff8f6b"/><path d="M17 16h15a16 16 0 0 1-4 10H17z" fill="#ed6c47"/><rect y="7" width="16" height="18" fill="#c43e1c"/><text x="8" y="21" text-anchor="middle" class="logo-text" font-size="13" fill="#fff">P</text></svg></div>
  <div class="tile"><svg viewBox="0 0 32 32"><rect x="6" width="26" height="32" rx="2" fill="#ca64ea"/><rect x="22" y="8" width="10" height="8" fill="#ae4bd5"/><rect x="22" y="16" width="10" height="8" fill="#9332bf"/><rect x="22" y="24" width="10" height="8" fill="#7719aa"/><rect y="7" width="17" height="18" fill="#7719aa"/><text x="8.500" y="21" text-anchor="middle" class="logo-text" font-size="13" fill="#fff">N</text></svg></div>
  <div class="tile"><svg viewBox="0 0 32 32"><path d="M3 0h24c2 0 3 1 3 3v24c0 2-1 3-3 3h-6l-4 2h-5l-3-2H3c-2 0-3-1-3-3V3C0 1 1 0 3 0z" fill="#f5a623"/><rect x="9" y="6" width="13" height="19" rx="5" fill="none" stroke="#fff" stroke-width="2"/><path d="M13 10h5l-3 5 3 5h-5" fill="none" stroke="#fff" stroke-width="1.500"/></svg></div>
  <div class="tile"><svg viewBox="0 0 32 32"><rect width="32" height="32" fill="#1b2a45"/><rect x="1" y="1" width="30" height="17" fill="#d9dfea"/><rect x="1" y="17" width="30" height="14" fill="#1e5bb8"/><text x="16" y="14" text-anchor="middle" class="logo-mono" font-size="12" fill="#1b2a6a">DEV</text><text x="16" y="28" text-anchor="middle" class="logo-mono" font-size="11" fill="#3a8be8">C++</text></svg></div>
  <div class="tile"><svg viewBox="0 0 32 32"><rect width="32" height="32" rx="3" fill="#4a4a4a"/><path d="M25 4L8 10v8l9 3-9 4v3l17-6v-7l-9-3 9-4z" fill="#ff9800"/></svg></div>
  <div class="tile"><svg viewBox="0 0 32 32"><path d="M23 0l9 4v24l-9 4-14-13-6 5-3-2V10l3-2 6 5zM23 9l-9 7 9 7z" fill="#1f9cf0"/><path d="M23 0v9L0 22v-12l3-2 6 5z" fill="#0a7cc4"/></svg></div>
  <div class="tile"><svg viewBox="0 0 32 32"><path d="M23 0l9 4v24l-9 4-14-13-6 5-3-2V10l3-2 6 5zM23 9l-9 7 9 7z" fill="#a07ae0"/><path d="M0 10l3-2 20 24-14-13-6 5-3-2z" fill="#6a3fb5"/></svg></div>
  <div class="tile"><svg viewBox="0 0 32 32"><path d="M3 0h26v14L32 32H3z" fill="#21d789"/><path d="M18 0h14v32H10z" fill="#fcf84a"/><path d="M0 4l4-4h20l8 8v4L18 0z" fill="#07c3f2"/><rect x="4" y="4" width="22" height="24" fill="#000"/><text x="15" y="16" text-anchor="middle" class="logo-text" font-size="12" fill="#fff">PC</text><rect x="7" y="22" width="8" height="2" fill="#fff"/></svg></div>
  <div class="tile"><svg viewBox="0 0 32 32"><rect x="1" y="1" width="30" height="30" fill="#0869c3"/><path d="M1 1h22L1 31z" fill="#e8296a"/><path d="M1 1h16L1 14z" fill="#8a3fa8"/><rect x="5" y="5" width="22" height="22" fill="#000"/><text x="14" y="17" text-anchor="middle" class="logo-text" font-size="12" fill="#fff">IJ</text><rect x="8" y="22" width="8" height="2" fill="#fff"/></svg></div>
  <div class="tile active"><svg viewBox="0 0 32 32"><rect x="3" y="3" width="26" height="26" rx="5" fill="#001e36" stroke="#31a8ff" stroke-width="2"/><text x="16" y="23" text-anchor="middle" class="logo-text" font-size="16" fill="#b6e0ff">Ps</text></svg></div>
  <div class="tile"><svg viewBox="0 0 32 32"><rect x="2" y="2" width="28" height="28" fill="#0a2438" stroke="#a3cde8" stroke-width="2"/><text x="16" y="24" text-anchor="middle" class="logo-text" font-size="18" fill="#a3cde8">Lr</text></svg></div>
  <div class="tile"><svg viewBox="0 0 32 32"><rect x="2" y="2" width="28" height="28" fill="#2a0505" stroke="#e0191b" stroke-width="2.500"/><path d="M7 24c3-1 9-12 8-18-1 8 4 12 10 12-7 0-12 1-18 6z" fill="none" stroke="#e8e8e8" stroke-width="1.500"/></svg></div>
  <div class="tile"><svg viewBox="0 0 32 32"><path d="M12 5l14-5 4 12-12 6z" fill="#d6b068"/><circle cx="12" cy="17" r="10" fill="#ddd"/><rect x="8" y="8" width="9" height="18" fill="#f4d21a" stroke="#222"/><path d="M17 24l6 8" stroke="#777" stroke-width="2.500"/></svg></div>
  <div class="tile"><svg viewBox="0 0 32 32"><ellipse cx="16" cy="10" rx="8" ry="10" fill="#111"/><circle cx="13" cy="7" r="2" fill="#fff"/><circle cx="19" cy="7" r="2" fill="#fff"/><path d="M13 11h6l-3 2z" fill="#f5a623"/><ellipse cx="16" cy="21" rx="8" ry="10" fill="#fff"/><path d="M7 14h18v5l-3 0-1 5-4-4H7z" fill="#e5161a"/><path d="M9 30h6v2H9zM17 30h6v2h-6z" fill="#f5a623"/></svg></div>
  <div class="tile"><svg viewBox="0 0 32 32"><ellipse cx="12" cy="13" rx="12" ry="11" fill="#2fc254"/><path d="M5 21l-1 6 6-4z" fill="#2fc254"/><ellipse cx="22" cy="20" rx="10" ry="9" fill="#e6e6e6"/><circle cx="8" cy="10" r="1.500" fill="#15702f"/><circle cx="16" cy="10" r="1.500" fill="#15702f"/><circle cx="19" cy="18" r="1.300" fill="#777"/><circle cx="26" cy="18" r="1.300" fill="#777"/></svg></div>
  <div class="tile"><svg viewBox="0 0 32 32"><ellipse cx="16" cy="16" rx="16" ry="16" fill="#2a93ea"/><path d="M7 10c6 3 12 3 18-1-1 6-3 11-9 17 1-3 1-5 1-7-5 0-8-4-10-9z" fill="#e8f3fd"/></svg></div>
  <div class="tile"><svg viewBox="0 0 32 32"><rect x="2" y="3" width="28" height="25" fill="#89c2a8"/><rect x="6" y="7" width="20" height="19" fill="#2c4a3d"/><rect x="0" y="28" width="32" height="3" fill="#8fcab0"/><ellipse cx="16" cy="6" rx="5" ry="6" fill="#f3e4d2"/><path d="M11 12h10v14H11z" fill="#e8790f"/></svg></div>
  <div class="tile"><svg viewBox="0 0 32 32"><ellipse cx="15" cy="16" rx="15" ry="16" fill="#fbda0a"/><path d="M16 5v16" stroke="#167a4b" stroke-width="3"/><path d="M16 3c2 4 6 5 9-1-1 6-5 9-9 9z" fill="#18a66c"/><ellipse cx="13" cy="23" rx="6" ry="5" fill="#18a66c"/></svg></div>
  <div class="tile"><svg viewBox="0 0 32 32"><rect width="32" height="32" rx="6" fill="#dd001b"/><circle cx="15" cy="19" r="8" fill="none" stroke="#fff" stroke-width="2.500"/><path d="M15 19c-2-5 1-11 6-12 2 0 3 1 4 3" fill="none" stroke="#fff" stroke-width="2.500"/><circle cx="15" cy="19" r="3" fill="none" stroke="#fff" stroke-width="2"/></svg></div>
  <div class="tray">
    <div class="ti"><svg width="26" height="20" viewBox="0 0 26 20"><path d="M1 19L13 2l12 17" fill="none" stroke="#fff" stroke-width="1.500"/></svg></div>
    <div class="ti"><svg width="24" height="32" viewBox="0 0 32 32"><ellipse cx="16" cy="10" rx="8" ry="10" fill="#111" stroke="#555"/><circle cx="13" cy="7" r="2" fill="#fff"/><circle cx="19" cy="7" r="2" fill="#fff"/><path d="M13 11h6l-3 2z" fill="#f5a623"/><ellipse cx="16" cy="21" rx="8" ry="10" fill="#fff"/><path d="M7 14h18v5l-3 0-1 5-4-4H7z" fill="#e5161a"/><path d="M9 30h6v2H9zM17 30h6v2h-6z" fill="#f5a623"/></svg></div>
    <div class="ti"><svg width="32" height="32" viewBox="0 0 32 32"><path d="M4 0v6M9 0v6M1 6h11v6l-3 4H4l-3-4zM6 16v14h20" fill="none" stroke="#fff" stroke-width="1.800"/><rect x="12" y="8" width="19" height="20" fill="#000" stroke="#fff" stroke-width="1.800"/><rect x="15" y="12" width="13" height="13" fill="#ddd"/></svg></div>
    <div class="ti"><svg width="32" height="34" viewBox="0 0 32 34"><path d="M10 2h21v23H17M1 2h11v17H1zM6 19v13M1 33h30M16 25v8" fill="none" stroke="#fff" stroke-width="2"/><rect x="4" y="8" width="4" height="4" fill="#fff"/></svg></div>
    <div class="ti"><svg width="36" height="32" viewBox="0 0 36 32"><path d="M1 11h6l9-8v26l-9-8H1z" fill="none" stroke="#fff" stroke-width="1.800"/><path d="M21 11c2 3 2 7 0 10" fill="none" stroke="#fff" stroke-width="2"/><path d="M26 7c3 5 3 13 0 18" fill="none" stroke="#ddd" stroke-width="2"/><path d="M31 2c5 8 5 20 0 28" fill="none" stroke="#777" stroke-width="2"/></svg></div>
    <div class="ti ime">中</div>
    <div class="ti"><svg width="32" height="34" viewBox="0 0 32 34"><path d="M4 3l22-3 6 28-25 6z" fill="#f2541b"/><path d="M23 9c-5-2-11-1-11 3s9 3 9 8-8 5-12 2" fill="none" stroke="#fff" stroke-width="4"/></svg></div>
    <div class="ti clock">20:21</div>
    <div class="ti"><svg width="34" height="34" viewBox="0 0 34 34"><path d="M1.500 1.500h30v25h-10l-5 5-5-5h-10z" fill="none" stroke="#fff" stroke-width="2"/></svg></div>
  </div>
  <i class="show-desktop"></i>
</footer>
</body>
</html>
```
FILE: styles.css
```css
* { box-sizing: border-box; }
html, body { margin: 0; padding: 0; }
body {
  width: 2560px; height: 1600px; overflow: hidden;
  background: #1f1f1f; color: #ccc;
  display: flex; flex-direction: column;
  font-family: "Noto Sans CJK SC", "Liberation Sans", sans-serif;
  font-size: 23px;
}
svg { display: block; flex: none; }
i { display: block; font-style: normal; }
.logo-text { font-family: "Liberation Sans", sans-serif; font-weight: 700; }
.logo-serif { font-family: "Liberation Serif", serif; }
.logo-mono { font-family: "Liberation Sans", sans-serif; font-weight: 700; }

/* menu bar */
.menubar {
  height: 50px; flex: none; background: #323232; border-bottom: 2px solid #1f1f1f;
  display: flex; align-items: flex-start; position: relative;
}
.ps-logo { width: 28px; height: 28px; margin: 9px 0 0 12px; }
.menu { display: flex; gap: 22.300px; margin-left: 30px; height: 45px; align-items: center; color: #d8d8d8; font-size: 24px; letter-spacing: -.15px; white-space: nowrap; }
.winctl {
  margin-left: auto; margin-right: 7px; width: 205px; height: 37px;
  border: 2px solid #444; border-top: 0; border-radius: 0 0 6px 6px; display: flex;
}
.winbtn { display: flex; align-items: center; justify-content: center; border-right: 2px solid #444; padding-top: 10px; }
.w-min { width: 55px; }
.w-res { width: 54px; padding-top: 0; padding-bottom: 2px; }
.w-close { flex: 1; border-right: 0; padding-top: 4px; }

/* options */
.options {
  height: 70px; flex: none; background: #323232; margin-left: 2px; margin-right: 2px;
  display: flex; align-items: center; position: relative; color: #8c8c8c;
}
.opt-grip { width: 4px; height: 38px; margin-left: 10px; background: repeating-linear-gradient(#1f1f1f 0 2px, transparent 2px 5px); }
.opt-home { margin-left: 24px; }
.opt-sep { width: 2px; height: 50px; background: #272727; }
.s1 { margin-left: 33px; }
.opt-tool { margin-left: 11px; }
.c1 { margin-left: 20px; }
.s2 { margin-left: 17px; }
.opt-label { font-size: 23px; white-space: nowrap; color: #868686; padding-bottom: 4px; }
.l1 { margin-left: 24px; width: 112px; }
.l2 { margin-left: 21px; width: 90px; }
.opt-input { width: 108px; height: 37px; border: 2px solid #444; border-radius: 5px; background: #242424; display: flex; align-items: center; margin-bottom: 2px; }
.opt-val { flex: 1; padding-left: 5px; color: #eee; font-size: 23px; padding-bottom: 1px; }
.opt-drop { width: 29px; height: 100%; border-left: 2px solid #444; display: flex; align-items: center; justify-content: center; }
.s3 { margin-left: 11px; }
.opt-right { margin-left: auto; display: flex; align-items: center; margin-right: 19px; }
.or-panel { margin-left: 27px; }
.or-chev { margin-left: 21px; }
.or-share { margin-left: 24px; }

/* workspace */
.workspace { flex: 1; display: flex; min-height: 0; }
.toolcol { width: 78px; margin-right: 4px; display: flex; flex-direction: column; padding-left: 2px; flex: none; }
.collapse { height: 24px; margin-top: 2px; background: #282828; flex: none; position: relative; }
.dbl { color: #9a9a9a; font-size: 24px; line-height: 20px; letter-spacing: 0; font-family: "Liberation Sans", sans-serif; }
.collapse .dbl { position: absolute; left: 11px; top: -2px; }
.tools { flex: 1; background: #323232; display: flex; flex-direction: column; align-items: center; }
.grip { width: 38px; height: 9px; margin: 6px auto 17px; background: repeating-linear-gradient(90deg, #202020 0 2px, transparent 2px 4px); flex: none; }
.tool { width: 64px; height: 52px; display: flex; align-items: center; justify-content: center; position: relative; flex: none; }
.tool svg { width: 40px; height: 40px; }
.tool.more::after {
  content: ""; position: absolute; right: 1px; bottom: 4px; width: 0; height: 0;
  border-left: 7px solid transparent; border-bottom: 7px solid #b8b8b8;
}
.tool.active { background: #1c1c1c; border: 2px solid #3c3c3c; border-radius: 6px; }
.tool-t { font-family: "Liberation Serif", serif; font-weight: 700; font-size: 40px; color: #d6d6d6; line-height: 40px; }
.color-tools { width: 56px; height: 40px; flex: none; display: flex; justify-content: space-between; align-items: center; margin-bottom: 3px; }
.fgbg { width: 62px; height: 58px; position: relative; flex: none; }
.fg-swatch { position: absolute; left: 1px; top: 1px; width: 37px; height: 37px; background: #0050a5; border: 2px solid #fff; outline: 3px solid #1a1a1a; }
.bg-swatch { position: absolute; left: 21px; top: 21px; width: 37px; height: 37px; background: #000; border: 2px solid #fff; outline: 3px solid #1a1a1a; }
.qm { margin-top: 10px; }

/* document */
.doc { width: 1653px; flex: none; display: flex; flex-direction: column; }
.doc-tabs { height: 58px; margin-top: 2px; background: #282828; flex: none; display: flex; border-bottom: 2px solid #1f1f1f; }
.doc-tab { width: 354px; background: #323232; display: flex; align-items: center; padding: 0 0 3px 20px; gap: 14px; color: #d8d8d8; white-space: nowrap; font-size: 23.600px; }
.doc-tab b { font-weight: 400; color: #7e7e7e; font-size: 26px; font-family: "Liberation Sans", sans-serif; }
.hrow { height: 34px; flex: none; display: flex; border-bottom: 2px solid #1f1f1f; }
.rcorner { width: 32px; flex: none; background: #303030 linear-gradient(#777, #777) 0 21px / 100% 1px no-repeat; }
.hruler { width: 1586px; flex: none; display: flex; overflow: hidden; background: #2b2b2b; position: relative; }
.hcell {
  width: 75px; flex: none; height: 32px; border-left: 1px solid #6b6b6b; color: #999;
  font-family: "Liberation Sans", sans-serif; font-size: 24px; letter-spacing: -1.200px; padding-left: 3px; white-space: nowrap;
  background: repeating-linear-gradient(90deg, transparent 0 14px, #6b6b6b 14px 15px) 0 100% / 100% 6px no-repeat;
}
.hcell span { background: #2b2b2b; display: block; width: fit-content; height: 32px; line-height: 38px; padding-right: 2px; }
.hcell.first { width: 45px; border-left: 0; }
.hcell.marked { position: relative; }
.hcell.marked::before { content: ""; position: absolute; left: -1px; top: 0; width: 1px; height: 20px; background: #fff; }
.gutter { flex: 1; background: #2b2b2b; }
.mainrow { flex: 1; min-height: 0; display: flex; }
.vruler { width: 32px; flex: none; background: #2b2b2b; overflow: hidden; display: flex; flex-direction: column; }
.vcell {
  height: 75px; flex: none; border-top: 1px solid #6b6b6b; padding: 3px 0 0 3px;
  display: flex; flex-direction: column; color: #99a1a5; font-family: "Liberation Sans", sans-serif; font-size: 23px; line-height: 21.600px;
  background: repeating-linear-gradient(transparent 0 14px, #6b6b6b 14px 15px) 100% 0 / 6px 100% no-repeat; position: relative;
}
.vcell span { transform: scaleX(.85); transform-origin: 0 50%; }
.vcell.first { height: 47px; border-top: 0; }
.vcell.marked::before { content: ""; position: absolute; left: 2px; top: 15px; width: 16px; height: 1px; background: #fff; z-index: 1; }
.pasteboard { width: 1586px; flex: none; background: #191919; padding: 46px 0 0 44px; }
.artboard { width: 1500px; height: 1200px; background: #fff; }
.status { height: 34px; flex: none; display: flex; background: #2b2b2b; align-items: stretch; white-space: nowrap; }
.st-zoom { width: 96px; padding-left: 20px; color: #e4e4e4; font-size: 22px; line-height: 30px; }
.st-info { width: 367px; background: #323232; padding: 0 0 3px 20px; color: #999; font-size: 23px; line-height: 30px; display: flex; align-items: center; gap: 24px; }

/* right */
.rightarea { flex: 1; display: flex; flex-direction: column; margin-left: 2px; min-width: 0; }
.rstrip { height: 26px; background: #282828; flex: none; position: relative; }
.d-left { position: absolute; left: 47px; top: 0; }
.d-right { position: absolute; right: 11px; top: 0; }
.rmain { flex: 1; display: flex; min-height: 0; gap: 6px; }
.dock { width: 75px; flex: none; display: flex; flex-direction: column; gap: 2px; }
.dblock { background: #323232; display: flex; flex-direction: column; align-items: center; flex: none; }
.dblock .grip { width: 24px; height: 9px; margin: 4px auto 0; }
.b1 { height: 80px; }
.b1 svg { margin-top: 16px; }
.b2 { height: 136px; }
.brp { margin-top: 16px; }
.adj { margin-top: 25px; }
.b3 { height: 136px; }
.b4 { flex: 1; }
.dk-a { display: flex; align-items: center; margin-top: 11px; color: #d6d6d6; font-family: "Liberation Sans", sans-serif; font-size: 33px; line-height: 40px; }
.dk-a i { width: 1px; height: 33px; background: #d6d6d6; margin-left: 3px; }
.dk-p { margin-top: 16px; color: #d6d6d6; font-family: "DejaVu Sans", sans-serif; font-weight: 700; font-size: 30px; line-height: 40px; }

.panels { flex: 1; display: flex; flex-direction: column; gap: 7px; }
.panel { background: #323232; display: flex; flex-direction: column; }
.p-color { height: 693px; flex: none; }
.p-layers { height: 692px; flex: none; }
.ptabs { height: 56px; flex: none; background: #282828; display: flex; align-items: stretch; position: relative; }
.ptab { width: 79px; border-right: 1px solid #222; text-align: center; line-height: 46px; font-size: 22px; color: #7f7f7f; flex: none; padding-right: 1px; }
.ptab.on { background: #323232; color: #e2e2e2; border-right: 0; }
.pmenu { position: absolute; right: 11px; top: 20px; }

.colorbody { display: flex; padding: 14px 0 0 16px; }
.cswatch { width: 74px; height: 66px; position: relative; flex: none; }
.cs-fg { position: absolute; left: 4px; top: 8px; width: 36px; height: 36px; background: #0050a5; border: 2px solid #fff; outline: 2px solid #000; box-shadow: 0 0 0 4px #666; }
.cs-bg { position: absolute; left: 23px; top: 27px; width: 39px; height: 39px; background: #000; border: 2px solid #fff; outline: 2px solid #111; }
.cfield {
  width: 546px; height: 582px; flex: none; position: relative; overflow: hidden;
  background: linear-gradient(to top, #000, rgba(0,0,0,0)), linear-gradient(to right, #fff, #0080ff);
}
.ccursor { position: absolute; left: 534px; top: 196px; width: 24px; height: 24px; border: 2px solid #fff; border-radius: 50%; }
.hue-wrap { display: flex; margin-left: 16px; position: relative; }
.hue-handle { margin-top: 222px; }
.hue { width: 38px; height: 582px; margin-left: 4px; background: linear-gradient(#f00, #f0f 16.660%, #00f 33.330%, #0ff 50%, #0f0 66.660%, #ff0 83.330%, #f00); }

.lrow { flex: none; display: flex; align-items: center; border-bottom: 3px solid #282828; background: #323232; padding-left: 7px; color: #6e6e6e; }
.r-filter { height: 64px; padding-top: 13px; }
.r-blend { height: 58px; padding-top: 6px; }
.r-lock { height: 64px; padding-top: 1px; }
.lselect { height: 38px; border: 2px solid #3e3e3e; border-radius: 5px; background: #2a2a2a; display: flex; align-items: center; position: relative; color: #6e6e6e; font-size: 23px; }
.lselect span { padding-bottom: 2px; }
.sel-chev { position: absolute; right: 7px; top: 15px; }
.ls-kind { width: 173px; padding-left: 14px; gap: 6px; }
.fil-icons { display: flex; align-items: center; gap: 24px; margin-left: 32px; }
.fi-t { font-family: "Liberation Serif", serif; font-weight: 700; color: #7d7d7d; font-size: 28px; line-height: 28px; width: 22px; text-align: center; }
.ftoggle { width: 18px; height: 36px; margin-left: 34px; border: 2px solid #3e3e3e; border-radius: 9px; position: relative; }
.ftoggle i { position: absolute; left: -1px; top: -2px; width: 16px; height: 16px; border-radius: 50%; background: #808080; }
.ls-mode { width: 235px; padding-left: 18px; }
.llabel { white-space: nowrap; font-size: 22px; color: #6e6e6e; padding-bottom: 3px; }
.lb-op { margin-left: 16px; width: 112px; }
.lpct { width: 107px; height: 36px; border: 2px solid #3e3e3e; border-radius: 5px; background: #2a2a2a; display: flex; align-items: center; color: #6e6e6e; font-size: 22px; }
.lpct span { width: 76px; padding: 0 0 2px 5px; flex: none; }
.lpct b { flex: 1; height: 100%; border-left: 2px solid #3e3e3e; display: flex; align-items: center; justify-content: center; }
.lb-lock { margin-left: 7px; width: 74px; }
.lock-icons { display: flex; align-items: center; gap: 18px; width: 217px; }
.lb-fill { width: 65px; }
.llist { flex: 1; display: flex; flex-direction: column; background: #2b2b2b; min-height: 0; }
.layer { height: 69px; flex: none; display: flex; }
.leye { width: 61px; flex: none; display: flex; align-items: center; justify-content: center; padding-left: 2px; }
.lbody { flex: 1; background: #4a4a4a; display: flex; align-items: center; padding-left: 7px; }
.lthumb { width: 64px; height: 52px; background: #fff; border: 2px solid #616161; flex: none; }
.lname { margin-left: 20px; color: #e4e4e4; font-size: 23px; padding-bottom: 2px; }
.llock { margin-left: auto; margin-right: 31px; }
.lscroll { width: 34px; flex: none; background: #2d2d2d; }
.lempty { flex: 1; border-bottom: 2px solid #262626; }
.lfoot { height: 48px; flex: none; display: flex; align-items: center; background: #323232; padding-left: 332px; }
.lfoot > svg:nth-child(1) { margin-right: 27px; }
.f-fx { font-family: "Liberation Serif", serif; font-style: italic; color: #6e6e6e; font-size: 32px; line-height: 32px; width: 40px; display: flex; align-items: flex-end; margin-right: 17px; }
.f-fx svg { margin-left: 2px; margin-bottom: 2px; }
.lfoot > svg:nth-child(3) { margin-right: 30px; }
.f-adj { display: flex; width: 34px; align-items: flex-end; margin-right: 18px; }
.f-tri { margin-left: 1px; margin-bottom: -6px; }
.lfoot > svg:nth-child(5) { margin-right: 30px; }
.lfoot > svg:nth-child(6) { margin-right: 30px; }

/* taskbar */
.taskbar {
  height: 60px; flex: none; display: flex; position: relative;
  background:
    linear-gradient(100deg, rgba(0,0,0,0) 58%, rgba(60,60,80,.25) 60%, rgba(0,0,0,0) 63%),
    linear-gradient(105deg, rgba(0,0,0,0) 26%, rgba(80,90,100,.25) 30%, rgba(0,0,0,0) 33%),
    linear-gradient(100deg, rgba(0,0,0,0) 8%, rgba(60,40,70,.3) 11%, rgba(0,0,0,0) 15%),
    linear-gradient(100deg, rgba(0,0,0,0) 37%, rgba(70,50,30,.25) 40%, rgba(0,0,0,0) 43%),
    linear-gradient(90deg, #000 78%, #161216 80%, #000 85%);
}
.tile { width: 62.100px; flex: none; height: 60px; display: flex; align-items: center; justify-content: center; position: relative; }
.tile svg { width: 32px; height: 32px; }
.tile.win { width: 79px; }
.winlogo { margin-right: 7px; }
.tile.under::after { content: ""; position: absolute; left: 10px; right: 7px; bottom: 0; height: 4px; background: #f48fbb; }
.tile.active { background: linear-gradient(110deg, #555259, #47454b); }
.tile.active::after { content: ""; position: absolute; left: 0; right: 0; bottom: 0; height: 4px; background: #f48fbb; }
.tray { display: grid; grid-template-columns: 50px 46px 52px 44px 52px 40px 80px 74px 98px; height: 60px; margin-left: 2px; }
.ti { display: flex; align-items: center; justify-content: center; color: #fff; }
.ime { font-size: 26px; }
.clock { font-size: 25px; font-family: "Noto Sans", "Liberation Sans", sans-serif; }
.show-desktop { position: absolute; right: 9px; top: 0; width: 1px; height: 60px; background: #888; }
```
